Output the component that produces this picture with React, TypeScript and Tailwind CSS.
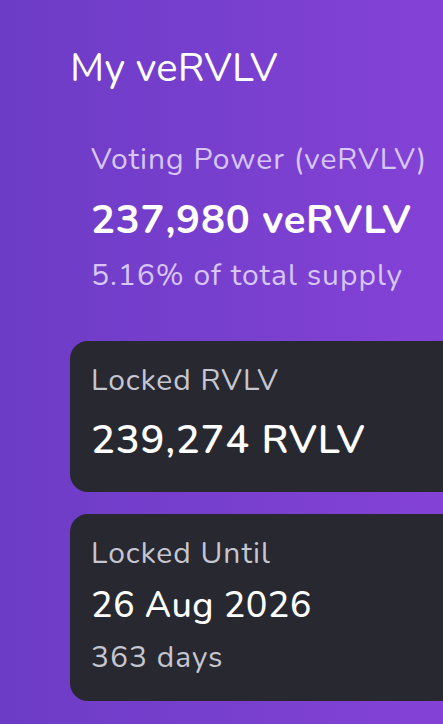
import React from "react";

export default function App() {
  return (
    <div className="w-[443px] h-[724px] overflow-hidden bg-gradient-to-r from-[#6c3cc6] to-[#8442d6] font-['Nunito',Lato,sans-serif] pl-[70px] pt-[44px]">
      <h1 className="text-[40px] leading-[48px] font-normal text-white tracking-[0.2px]">My veRVLV</h1>
      <div className="mt-[50px] pl-[21px] flex flex-col">
        <div className="text-[30px] leading-[36px] tracking-[1px] text-[#d8c6f6]">Voting Power (veRVLV)</div>
        <div className="mt-[18px] text-[40px] leading-[48px] tracking-[0.8px] font-bold text-white">237,980 veRVLV</div>
        <div className="mt-[14px] text-[30px] leading-[36px] tracking-[1px] text-[#d8c6f6]">5.16% of total supply</div>
      </div>
      <div className="mt-[47px] w-[420px] h-[151px] rounded-[18px] bg-[#272830] pl-[21px] pt-[22px] flex flex-col">
        <div className="text-[30px] leading-[36px] tracking-[1px] text-[#c6c6d1]">Locked RVLV</div>
        <div className="mt-[17px] text-[40px] leading-[48px] tracking-[0.8px] font-semibold text-white">239,274 RVLV</div>
      </div>
      <div className="mt-[22px] w-[420px] h-[187px] rounded-[18px] bg-[#272830] pl-[21px] pt-[22px] flex flex-col">
        <div className="text-[30px] leading-[36px] tracking-[1px] text-[#c6c6d1]">Locked Until</div>
        <div className="mt-[12px] text-[36px] leading-[44px] tracking-[0.4px] font-medium text-white">26 Aug 2026</div>
        <div className="mt-[12px] text-[30px] leading-[36px] tracking-[1px] text-[#c6c6d1]">363 days</div>
      </div>
    </div>
  );
}
